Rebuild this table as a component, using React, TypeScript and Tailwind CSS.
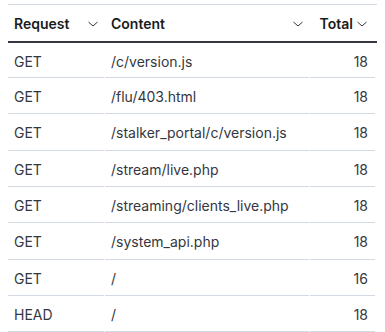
import React from 'react';

const rows = [
  { method: 'GET', content: '/c/version.js', total: 18 },
  { method: 'GET', content: '/flu/403.html', total: 18 },
  { method: 'GET', content: '/stalker_portal/c/version.js', total: 18 },
  { method: 'GET', content: '/stream/live.php', total: 18 },
  { method: 'GET', content: '/streaming/clients_live.php', total: 18 },
  { method: 'GET', content: '/system_api.php', total: 18 },
  { method: 'GET', content: '/', total: 16 },
  { method: 'HEAD', content: '/', total: 18 },
];

function Chevron() {
  return (
    <svg width="12" height="12" viewBox="0 0 12 12" className="shrink-0">
      <path d="M1.5 4l4.5 4 4.5-4" fill="none" stroke="#343741" strokeWidth="1" />
    </svg>
  );
}

export default function App() {
  return (
    <div
      className="bg-white w-[385px] h-[332px] overflow-hidden pt-1 px-2 text-[14px] leading-[20px] text-[#343741]"
      style={{ fontFamily: 'Inter, "Noto Sans", sans-serif' }}
    >
      <div className="border-t border-[#d3dae6]">
        {/* header */}
        <div className="grid grid-cols-[96px_204px_65px] gap-x-px h-[38px] border-b-2 border-[#343741] font-semibold text-[#1a1c21]">
          <div className="flex items-start justify-between pt-[9px] pl-[6px] pr-[5px]">
            <span>Request</span>
            <span className="pt-[4px]"><Chevron /></span>
          </div>
          <div className="flex items-start justify-between pt-[9px] pl-[6px] pr-[5px]">
            <span>Content</span>
            <span className="pt-[4px]"><Chevron /></span>
          </div>
          <div className="flex items-start justify-end gap-[3px] pt-[9px] pr-[7px]">
            <span>Total</span>
            <span className="pt-[4px]"><Chevron /></span>
          </div>
        </div>
        {rows.map((r, i) => {
          const h = i === 0 ? 'h-[35px]' : 'h-[36.35px]';
          return (
            <div key={i} className="grid grid-cols-[96px_204px_65px] gap-x-px">
              <div className={`${h} pt-[9px] pl-[6px] border-b border-[#d3dae6]`}>{r.method}</div>
              <div className={`${h} pt-[9px] pl-[6px] border-b border-[#d3dae6]`}>{r.content}</div>
              <div className={`${h} pt-[9px] pr-[7px] text-right border-b border-[#d3dae6]`}>{r.total}</div>
            </div>
          );
        })}
      </div>
    </div>
  );
}
